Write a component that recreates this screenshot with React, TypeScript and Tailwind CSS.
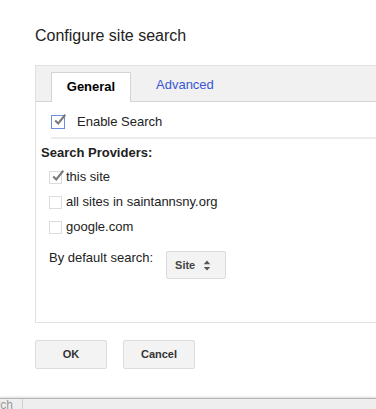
import React from "react";

function Check({ checked, focus, size = 13 }: { checked?: boolean; focus?: boolean; size?: number }) {
  return (
    <span
      className={`relative inline-block shrink-0 bg-white border ${focus ? "border-[#6d8fe0]" : "border-[#dcdcdc]"}`}
      style={{ width: size, height: size }}
    >
      {checked && (
        <svg viewBox="0 0 16 16" className="absolute left-[1px] -top-[3px] w-[14px] h-[14px]">
          <path d="M2.5 8.5 L6 12 L14 2" fill="none" stroke="#7a7a7a" strokeWidth="2.4" />
        </svg>
      )}
    </span>
  );
}

export default function App() {
  return (
    <div
      className="w-[376px] h-[409px] bg-white overflow-hidden flex flex-col text-[#222]"
      style={{ fontFamily: '"Liberation Sans", Arial, sans-serif' }}
    >
      <div className="pl-[35px] pt-[26px] text-[16px] leading-[20px] text-[#222]">Configure site search</div>

      {/* Panel */}
      <div className="ml-[35px] mt-[19px] w-[360px] h-[258px] border border-[#e0e0e0] border-r-0 flex flex-col">
        <div className="h-[36px] bg-[#f1f1f1] border-b border-[#d4d4d4] flex items-end pl-[15px]">
          <div className="w-[80px] h-[30px] -mb-px bg-white border border-[#d4d4d4] border-b-0 flex items-center justify-center pb-[2px] text-[13px] font-bold text-black">
            General
          </div>
          <div className="ml-[25px] h-[30px] pb-[3px] flex items-center text-[13px] text-[#3a56d6]">Advanced</div>
        </div>

        <div className="flex items-center pl-[15px] mt-[12px] h-[16px]">
          <Check checked focus size={14} />
          <span className="ml-[12px] text-[13px]">Enable Search</span>
        </div>
        <div className="ml-[15px] mt-[7px] h-[2px] bg-[#ececec]" />

        <div className="pl-[5px] mt-[6px] text-[13px] font-bold leading-[16px]">Search Providers:</div>

        <div className="flex flex-col pl-[13px] mt-[8px] gap-[9px] text-[13px] leading-[16px]">
          <div className="flex items-center h-[16px]">
            <Check checked />
            <span className="ml-[4px]">this site</span>
          </div>
          <div className="flex items-center h-[16px]">
            <Check />
            <span className="ml-[4px]">all sites in saintannsny.org</span>
          </div>
          <div className="flex items-center h-[16px]">
            <Check />
            <span className="ml-[4px]">google.com</span>
          </div>
        </div>

        <div className="flex items-start pl-[13px] mt-[16px]">
          <span className="text-[13px] leading-[16px] mt-[-1px]">By default search:</span>
          <div className="ml-[13px] w-[60px] h-[28px] bg-[#f3f3f3] border border-[#dcdcdc] rounded-[2px] flex items-center pl-[8px] text-[11px] font-bold text-[#444]">
            Site
            <svg viewBox="0 0 8 12" className="ml-[8px] w-[8px] h-[11px]">
              <path d="M4 0.5 L7.5 4.5 L0.5 4.5 Z M4 11.5 L7.5 7.5 L0.5 7.5 Z" fill="#555" />
            </svg>
          </div>
        </div>
      </div>

      {/* Buttons */}
      <div className="flex pl-[35px] mt-[17px] gap-[16px]">
        <button className="w-[72px] h-[29px] bg-[#f3f3f3] border border-[#dcdcdc] rounded-[2px] text-[11px] font-bold text-[#333]">
          OK
        </button>
        <button className="w-[72px] h-[29px] bg-[#f3f3f3] border border-[#dcdcdc] rounded-[2px] text-[11px] font-bold text-[#333]">
          Cancel
        </button>
      </div>

      {/* Page strip behind dialog */}
      <div className="mt-auto h-[11px] border-t border-[#b4b4b4] bg-[#eeeeee] flex shadow-[0_-1px_2px_rgba(0,0,0,0.15)]">
        <div className="w-[23px] border-r border-[#d0d0d0] overflow-hidden flex justify-end">
          <span className="text-[12px] leading-[14px] text-[#999] -mt-[1px] pr-[9px]">rch</span>
        </div>
      </div>
    </div>
  );
}
